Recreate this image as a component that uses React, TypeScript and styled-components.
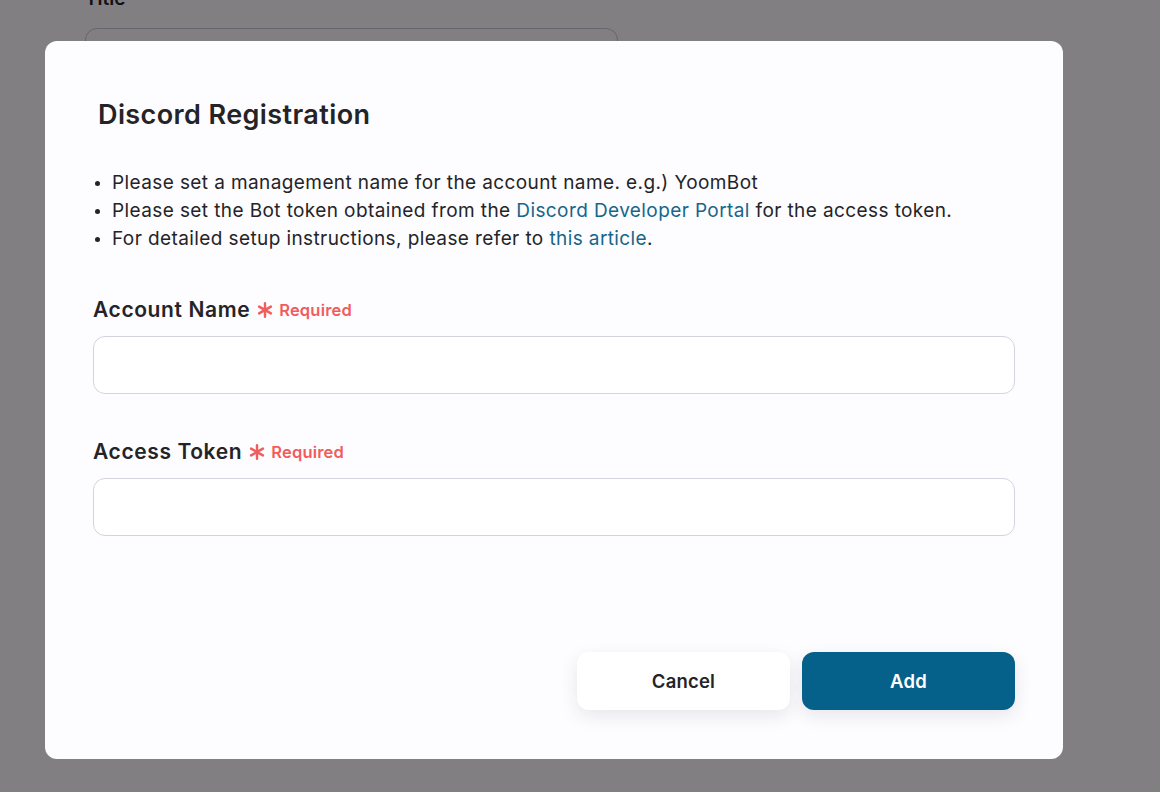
import styled, { createGlobalStyle } from "styled-components";

const GlobalStyle = createGlobalStyle`
    html, body {
        margin: 0;
        padding: 0;
        width: 1160px;
        height: 792px;
        overflow: hidden;
        background: #ffffff;
        font-family: "Inter", "Noto Sans", sans-serif;
        color: #242428;
    }
    * {
        box-sizing: border-box;
    }
`;

const Page = styled.div`
    position: relative;
    display: flow-root;
    width: 1160px;
    height: 792px;
    padding: 0 85px;

    .bg-label {
        margin-top: -13px;
        font-size: 19px;
        font-weight: 600;
        line-height: 24px;
        color: #222;
    }
    .bg-input {
        margin-top: 17px;
        width: 533px;
        height: 58px;
        border: 1px solid #c9c9d2;
        border-radius: 12px;
    }
`;

const Overlay = styled.div`
    position: absolute;
    inset: 0;
    background: rgba(3, 0, 5, 0.5);
    padding: 41px 0 0 45px;
`;

const Modal = styled.div`
    width: 1018px;
    height: 718px;
    background: #fdfcfe;
    border-radius: 12px;
    padding: 58px 48px 49px;
    display: flex;
    flex-direction: column;
`;

const Title = styled.h2`
    margin: 0 0 0 5px;
    font-size: 27px;
    line-height: 32px;
    font-weight: 600;
    letter-spacing: 0.4px;
    color: #242428;
`;

const Notes = styled.ul`
    margin: 38px 0 0;
    padding: 0 0 0 19px;
    font-size: 19px;
    line-height: 28px;
    letter-spacing: 0.4px;
    color: #242428;

    li::marker {
        font-size: 15px;
    }
    a {
        color: #16668a;
        text-decoration: none;
    }
`;

const Field = styled.div<{ $top: number }>`
    margin-top: ${(props) => props.$top}px;
    display: flex;
    flex-direction: column;
    gap: 14px;
`;

const Label = styled.label`
    display: flex;
    align-items: center;
    gap: 7px;
    font-size: 21px;
    line-height: 24px;
    font-weight: 600;
    letter-spacing: 0.6px;
    color: #242428;

    .required {
        display: flex;
        align-items: center;
        gap: 6px;
        font-size: 16.5px;
        font-weight: 600;
        letter-spacing: 0.2px;
        color: #f25c5c;
    }
`;

const TextInput = styled.input`
    width: 100%;
    height: 58px;
    border: 1px solid #d3d3df;
    border-radius: 12px;
    background: #ffffff;
    padding: 0 16px;
    font-family: inherit;
    font-size: 18px;
    outline: none;
`;

const Footer = styled.div`
    margin-top: auto;
    display: flex;
    justify-content: flex-end;
    gap: 12px;
`;

const ActionButton = styled.button<{ $primary?: boolean }>`
    width: 213px;
    height: 58px;
    border: 0;
    border-radius: 12px;
    font-family: inherit;
    font-size: 18.5px;
    font-weight: 600;
    letter-spacing: 0.2px;
    cursor: pointer;
    background: ${(props) => (props.$primary ? "#05618a" : "#ffffff")};
    color: ${(props) => (props.$primary ? "#ffffff" : "#242428")};
    box-shadow: 0 6px 18px rgba(40, 40, 80, 0.1);
`;

function Asterisk() {
    return (
        <svg width="16" height="16" viewBox="0 0 16 16" fill="none">
            <path
                d="M8 1.2v13.6M2.1 4.6l11.8 6.8M13.9 4.6l-11.8 6.8"
                stroke="#f25c5c"
                strokeWidth="2.4"
                strokeLinecap="round"
            />
        </svg>
    );
}

function RequiredMark() {
    return (
        <span className="required">
            <Asterisk />
            Required
        </span>
    );
}

export default function App() {
    return (
        <>
            <GlobalStyle />
            <Page>
                <div className="bg-label">Title</div>
                <div className="bg-input" />
                <Overlay>
                    <Modal>
                        <Title>Discord Registration</Title>
                        <Notes>
                            <li>
                                Please set a management name for the account
                                name. e.g.) YoomBot
                            </li>
                            <li>
                                Please set the Bot token obtained from the{" "}
                                <a href="#">Discord Developer Portal</a> for the
                                access token.
                            </li>
                            <li>
                                For detailed setup instructions, please refer to{" "}
                                <a href="#">this article</a>.
                            </li>
                        </Notes>
                        <Field $top={45}>
                            <Label>
                                Account Name
                                <RequiredMark />
                            </Label>
                            <TextInput type="text" />
                        </Field>
                        <Field $top={46}>
                            <Label>
                                Access Token
                                <RequiredMark />
                            </Label>
                            <TextInput type="text" />
                        </Field>
                        <Footer>
                            <ActionButton type="button">Cancel</ActionButton>
                            <ActionButton type="button" $primary>
                                Add
                            </ActionButton>
                        </Footer>
                    </Modal>
                </Overlay>
            </Page>
        </>
    );
}
